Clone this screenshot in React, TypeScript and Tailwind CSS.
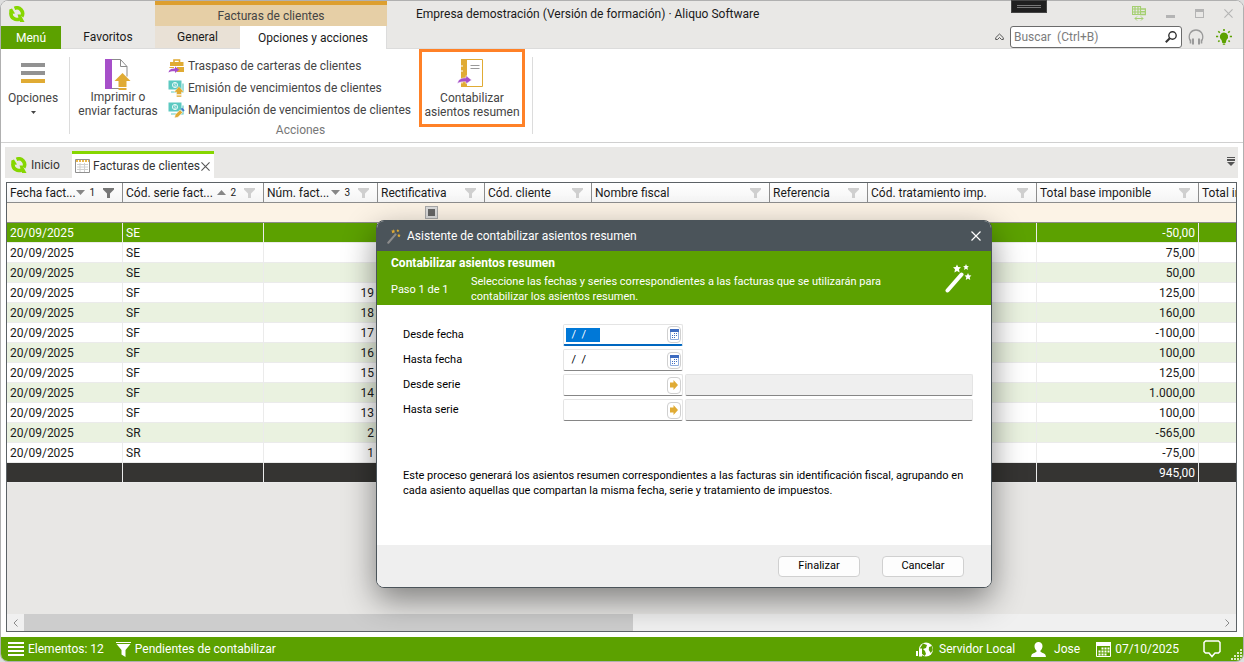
import { useEffect, useRef } from "react";
import type { ReactNode } from "react";
import clsx from "clsx";

interface Column {
  title: string;
  width: string;
  sort?: "asc" | "desc";
  order?: number;
  filtered?: boolean;
  checkbox?: boolean;
  last?: boolean;
}

const columns: Column[] = [
  { title: "Fecha fact...", width: "w-[116px]", sort: "desc", order: 1, filtered: true },
  { title: "Cód. serie fact...", width: "w-[141px]", sort: "asc", order: 2 },
  { title: "Núm. fact...", width: "w-[114px]", sort: "desc", order: 3 },
  { title: "Rectificativa", width: "w-[107px]", checkbox: true },
  { title: "Cód. cliente", width: "w-[107px]" },
  { title: "Nombre fiscal", width: "w-[178px]" },
  { title: "Referencia", width: "w-[98px]" },
  { title: "Cód. tratamiento imp.", width: "w-[169px]" },
  { title: "Total base imponible", width: "w-[162px]" },
  { title: "Total impuestos", width: "w-[120px]", last: true },
];

const invoices = [
  { serie: "SE", num: "", total: "-50,00" },
  { serie: "SE", num: "", total: "75,00" },
  { serie: "SE", num: "", total: "50,00" },
  { serie: "SF", num: "19", total: "125,00" },
  { serie: "SF", num: "18", total: "160,00" },
  { serie: "SF", num: "17", total: "-100,00" },
  { serie: "SF", num: "16", total: "100,00" },
  { serie: "SF", num: "15", total: "125,00" },
  { serie: "SF", num: "14", total: "1.000,00" },
  { serie: "SF", num: "13", total: "100,00" },
  { serie: "SR", num: "2", total: "-565,00" },
  { serie: "SR", num: "1", total: "-75,00" },
];

const Logo = () => (
  <svg viewBox="0 0 16 16" className="size-4 shrink-0" fill="none">
    <path d="M5.5 2.300A5.800 5.800 0 0 1 12.800 10.500" stroke="#86d600" strokeWidth="3.600" />
    <path d="M2 7.500a5.800 5.800 0 0 0 8.500 5.300" stroke="#86d600" strokeWidth="3.600" />
    <path d="M.300 3.500 3 2.500l3 5-5.800.8z" fill="#86d600" />
    <path d="M8.500 8.500h3L15.500 16H11z" fill="#86d600" />
  </svg>
);

const Funnel = ({ dark }: { dark?: boolean }) => (
  <svg viewBox="0 0 11 10" className={clsx("w-[11px] h-[10px] shrink-0", dark ? "text-[#767676]" : "text-[#cfcfcf]")}>
    <path d="M0 0h11v1.5L7 5.5V10H4V5.5L0 1.5z" fill="currentColor" />
  </svg>
);

const Triangle = ({ up }: { up?: boolean }) => (
  <svg viewBox="0 0 9 5" className="w-[9px] h-[5px] shrink-0">
    <path d={up ? "M0 5 4.5 0 9 5z" : "M0 0h9L4.5 5z"} fill="#868686" />
  </svg>
);

const BriefcaseIcon = () => (
  <svg viewBox="0 0 17 16" className="w-[17px] h-4 shrink-0" fill="none">
    <path d="M6 4V2h5.5v2" stroke="#e0ab34" strokeWidth="1.6" />
    <path d="M2 4h13.5v4H2z" fill="#e0ab34" />
    <path d="M9 9h7v5H9zM1.5 9H6v1H1.5z" fill="#e0ab34" />
    <path d="M.5 14.5C1 11 4 10.4 7 10.4V8.6l4.3 3.2L7 15v-1.8c-2.5-.2-5 .1-6.5 1.3z" fill="#a64fc9" />
  </svg>
);

const MoneyIcon = ({ edit }: { edit?: boolean }) => (
  <svg viewBox="0 0 17 17" className="size-[17px] shrink-0" fill="none">
    <path d="M3 12h12V3.5" stroke="#5cc9c1" strokeWidth="1.2" />
    <path d="M.5.5h13v9H.5z" fill="#5cc9c1" />
    <circle cx="7" cy="5" r="2.6" stroke="#e8f8f7" />
    <path d="M8.2 3.8C7 3 5.6 3.8 6.300 4.600c.6.700 2 .3 1.700 1.300-.3.700-1.500.6-2.200 0" stroke="#e8f8f7" strokeWidth=".8" />
    {edit ? (
      <>
        <path d="m6.500 16 .8-3.500 4.700-4.700 2.700 2.700-4.700 4.700z" fill="#e0ab34" stroke="#fff" strokeWidth=".6" />
        <path d="m12.800 7 1.300-1.200 2.500 2.500-1.200 1.300z" fill="#3f74c9" />
      </>
    ) : (
      <path d="M11 6.500 16 12h-2.500v2.500h-5V12H6zM8.500 15.200h5V17h-5z" fill="#e0ab34" stroke="#fff" strokeWidth=".4" />
    )}
  </svg>
);

const PrintIcon = () => (
  <svg viewBox="0 0 26 31" className="w-[26px] h-[31px]" fill="none">
    <path d="M7 .5h8.500l6.500 7v10M7 29.500h7M15.500.500v7H22" stroke="#8b8b8b" />
    <path d="M0 0h7v30H0z" fill="#a64fc9" />
    <path d="M17.500 14 25.500 22h-4v6h-8v-6h-4zM13.500 29h8v2h-8z" fill="#e0ab34" />
  </svg>
);

const LedgerIcon = () => (
  <svg viewBox="0 0 27 30" className="w-[27px] h-[30px] mr-1" fill="none">
    <path d="M5 1.500h20.500v27H5z" fill="#fff" stroke="#e0ab34" />
    <path d="M4 1h6v28H4v-3.500h2v-1.500H4v-10h2V12H4V9h2V7H4z" fill="#e0ab34" />
    <path d="M13.500 7.500h9M13.500 10.500h9" stroke="#9a9a9a" />
    <path d="M.5 25.500C1 21 5 19.800 9 19.800V17.500l5.500 4.500L9 26v-2.200c-4-.3-6.500.3-8.500 1.700z" fill="#a64fc9" stroke="#fff" strokeWidth=".5" />
  </svg>
);

const Star = ({ x, y, r, fill }: { x: number; y: number; r: number; fill: string }) => (
  <path
    transform={`translate(${x} ${y}) scale(${r})`}
    d="M0-1 .3-.35 1-.3.5.2.65 1 0 .6-.65 1-.5.2-1-.3-.3-.35z"
    fill={fill}
  />
);

const WandIcon = ({ stick, star, className }: { stick: string; star: string; className: string }) => (
  <svg viewBox="0 0 27 29" className={className} fill="none">
    <path d="M2.500 26.500 16.500 10.500" stroke={stick} strokeWidth="4" strokeLinecap="round" />
    <Star x={12} y={4.5} r={4} fill={star} />
    <Star x={21} y={3} r={2.9} fill={star} />
    <Star x={23} y={12.5} r={3.4} fill={star} />
  </svg>
);

const CloseX = ({ className }: { className: string }) => (
  <svg viewBox="0 0 10 10" className={className} fill="none" stroke="currentColor" strokeWidth="1.200">
    <path d="m.5.500 9 9m0-9-9 9" />
  </svg>
);

const CalendarButtonIcon = () => (
  <svg viewBox="0 0 9 11" className="w-[9px] h-[11px] shrink-0">
    <path d="M0 0h9v3H0z" fill="#3e6cc0" />
    <path d="M.5 3v7.500h8V3" fill="none" stroke="#8fadde" />
    <path d="M4 4h1v1H4zM6 4h1v1H6zM2 6h1v1H2zM4 6h1v1H4zM6 6h1v1H6zM2 8h1v1H2zM4 8h1v1H4z" fill="#3e6cc0" />
  </svg>
);

const ArrowButtonIcon = () => (
  <svg viewBox="0 0 8 10" className="w-2 h-2.5 shrink-0">
    <path d="M0 2.500h3.500V0L8 5 3.500 10V7.500H0z" fill="#e0ab34" />
  </svg>
);

const GridHeader = ({ column }: { column: Column }) => (
  <th className="h-5 p-0 pl-[3px] font-normal text-left border-r border-b border-[#8d8d8d] bg-linear-to-b from-white to-[#f4f4f4]">
    <div className="flex items-center pr-2 h-[19px]">
      <span className="flex-1 whitespace-nowrap">{column.title}</span>
      {column.sort && (
        <span className="flex items-center gap-1 mr-2 text-[10px]">
          <Triangle up={column.sort === "asc"} />
          {column.order}
        </span>
      )}
      {!column.last && <Funnel dark={column.filtered} />}
    </div>
  </th>
);

const InvoiceGrid = () => (
  <div className="flex-1 min-h-0 mt-1 mb-[5px] ml-[5px] mr-1.5 border border-[#5c6266] bg-[#e8e7e5] flex flex-col overflow-hidden">
    <div className="flex-1 overflow-hidden">
      <table className="table-fixed w-[1312px] border-separate border-spacing-0 leading-4">
        <colgroup>
          {columns.map((column) => (
            <col key={column.title} className={column.width} />
          ))}
        </colgroup>
        <thead>
          <tr>
            {columns.map((column) => (
              <GridHeader key={column.title} column={column} />
            ))}
          </tr>
          <tr>
            {columns.map((column) => (
              <td key={column.title} className="h-5 p-0 bg-[#fcf3e6] border-b border-[#8d8d8d]">
                {column.checkbox && (
                  <input
                    type="checkbox"
                    aria-label={column.title}
                    className="block mx-auto appearance-none size-[13px] p-0.5 border border-[#a8a8a8] bg-[#666] bg-clip-content shadow-[inset_0_0_0_2px_#dcdcdc]"
                  />
                )}
              </td>
            ))}
          </tr>
        </thead>
        <tbody>
          {invoices.map((invoice, i) => (
            <tr
              key={i}
              className={clsx(
                i === 0 ? "bg-[#5ca100] text-white" : i % 2 === 0 ? "bg-[#eaf2e0]" : "bg-white",
              )}
            >
              {columns.map((column, c) => (
                <td
                  key={column.title}
                  className={clsx(
                    "h-5 py-0 px-[3px] border-r border-b border-[#ebebeb]",
                    (c === 2 || c === 8) && "text-right",
                  )}
                >
                  {c === 0 && "20/09/2025"}
                  {c === 1 && invoice.serie}
                  {c === 2 && invoice.num}
                  {c === 8 && invoice.total}
                </td>
              ))}
            </tr>
          ))}
        </tbody>
        <tfoot>
          <tr className="bg-[#353432] text-white">
            {columns.map((column, c) => (
              <td key={column.title} className="h-5 py-0 px-[3px] border-r border-b border-[#ebebeb] text-right">
                {c === 8 && "945,00"}
              </td>
            ))}
          </tr>
        </tfoot>
      </table>
    </div>
    <div className="flex items-center h-[17px] bg-[#f0f0f0] text-[#8a8a8a]">
      <button aria-label="Desplazar a la izquierda" className="w-[17px] flex justify-center">
        <svg viewBox="0 0 5 8" className="w-[5px] h-2" fill="none" stroke="currentColor">
          <path d="M4.500.500 1 4l3.500 3.500" />
        </svg>
      </button>
      <div className="flex-1 h-full">
        <div className="w-[51%] h-full bg-[#cdcdcd]" />
      </div>
      <button aria-label="Desplazar a la derecha" className="w-[17px] flex justify-center">
        <svg viewBox="0 0 5 8" className="w-[5px] h-2" fill="none" stroke="currentColor">
          <path d="M.5.500 4 4 .5 7.500" />
        </svg>
      </button>
    </div>
  </div>
);

const TitleBar = () => (
  <header className="flex h-12 bg-[#e9e8e6]">
    <div className="w-[154px] flex flex-col">
      <div className="h-[25px] pl-2 flex items-center">
        <Logo />
      </div>
      <div className="flex flex-1">
        <button className="w-15 bg-[#5ca100] text-white">Menú</button>
        <button className="flex-1 border-b border-[#dcdcdc]">Favoritos</button>
      </div>
    </div>
    <div className="w-58 flex flex-col">
      <div className="h-[25px] border-t-4 border-[#dd9f2f] bg-[#e6cfa6] text-[#444] flex items-center justify-center">
        Facturas de clientes
      </div>
      <div className="flex flex-1">
        <button className="w-[85px] bg-[#e9e1d6] border-b border-[#dcdcdc]">General</button>
        <button className="flex-1 bg-white border-r border-[#dcdcdc]">Opciones y acciones</button>
      </div>
    </div>
    <div className="flex-1 flex flex-col border-b border-[#dcdcdc]">
      <div className="h-[25px] pl-[29px] pr-2.5 flex items-center">
        <h1 className="flex-1">Empresa demostración (Versión de formación) · Aliquo Software</h1>
        <div className="flex items-center gap-5 text-[#b4b4b4]">
          <svg viewBox="0 0 14 15" className="w-3.5 h-[15px]" fill="none" stroke="#a5cf72">
            <path d="M.5.500h8v8h-8zM.5 3h8M.5 6h8M3 .5v8M6 .5v8" strokeWidth="1.200" />
            <path d="M8 3h5.500v5.500H8M9 5.700h4" strokeWidth="1.400" />
            <path d="M3 12.500h8M5 10.500l-2 2 2 2M9 10.500l2 2-2 2" />
          </svg>
          <button aria-label="Minimizar" className="size-[9px] flex items-end">
            <span className="w-full h-[3px] bg-[#b4b4b4]" />
          </button>
          <button aria-label="Maximizar" className="size-[9px] border border-t-3 border-[#b4b4b4]" />
          <button aria-label="Cerrar">
            <CloseX className="size-[9px]" />
          </button>
        </div>
      </div>
      <div className="flex-1 flex items-center justify-end gap-1.5 pr-[11px]">
        <button aria-label="Contraer cinta">
          <svg viewBox="0 0 9 8" className="w-[9px] h-2" fill="none" stroke="#555">
            <path d="M.7 4.700 4.500 1l3.800 3.700v1.800H6.500L4.500 4.500l-2 2H.7z" />
          </svg>
        </button>
        <label className="w-43 h-[22px] flex items-center border border-[#6b6b6b] rounded-[3px] bg-white pl-[3px] pr-1">
          <input
            aria-label="Buscar"
            placeholder="Buscar  (Ctrl+B)"
            className="flex-1 min-w-0 outline-none placeholder:text-[#7c7c7c] whitespace-pre"
          />
          <svg viewBox="0 0 12 12" className="size-3" fill="none" stroke="#333">
            <circle cx="7.500" cy="4.500" r="3.700" strokeWidth="1.400" />
            <path d="M4.800 7.200.8 11.200" strokeWidth="2" />
          </svg>
        </label>
        <svg viewBox="0 0 16 16" className="size-4" fill="none" stroke="#9a9a9a">
          <path d="M2 11.500C-.5 5 3.500 1 8 1s8.500 4 6 10.500" strokeWidth="1.300" />
          <path d="M5 9.500v6M11 9.500v6" strokeWidth="2" />
          <path d="M2.500 10.500v4M13.500 10.500v4" strokeWidth="1.600" />
        </svg>
        <svg viewBox="0 0 16 16" className="size-4 ml-1.5" fill="#5ca100" stroke="#5ca100">
          <path d="M8 3.500a4.200 4.200 0 0 0-2.500 7.500l.8 3h3.400l.8-3A4.200 4.200 0 0 0 8 3.500zM6.800 14.500h2.400v1.300H6.800z" stroke="none" />
          <path d="M8 0v2M0 7.500h2.200M13.800 7.500H16M2.300 2.300l1.500 1.500M13.700 2.300l-1.500 1.500M2.300 12.700l1.200-1.200M13.700 12.700l-1.200-1.200" strokeWidth="1.600" />
        </svg>
      </div>
    </div>
  </header>
);

const Action = ({ icon, children }: { icon: ReactNode; children: ReactNode }) => (
  <button className="flex items-center gap-[3px] h-[22px] whitespace-nowrap">
    {icon}
    {children}
  </button>
);

const Ribbon = () => (
  <div className="flex h-[94px] border-b border-[#d0d0d0] text-[#444] leading-3.5">
    <button className="w-16 flex flex-col items-center pt-3.5">
      <span className="w-6 h-5 flex flex-col justify-between">
        <span className="h-1 bg-[#929292]" />
        <span className="h-1 bg-[#929292]" />
        <span className="h-1 bg-[#e0ab34]" />
      </span>
      <span className="mt-2">Opciones</span>
      <svg viewBox="0 0 5 3" className="w-[5px] h-[3px] mt-1.5">
        <path d="M0 0h5L2.500 3z" fill="#444" />
      </svg>
    </button>
    <div className="w-px h-[77px] mt-2 ml-1 bg-[#dcdcdc]" />
    <div className="flex flex-col">
      <div className="flex h-[78px]">
        <button className="w-24 flex flex-col items-center pt-2.5">
          <PrintIcon />
          <span className="whitespace-nowrap">
            Imprimir o
            <br />
            enviar facturas
          </span>
        </button>
        <div className="w-[253px] flex flex-col items-start pt-1.5 pl-0.5">
          <Action icon={<BriefcaseIcon />}>Traspaso de carteras de clientes</Action>
          <Action icon={<MoneyIcon />}>Emisión de vencimientos de clientes</Action>
          <Action icon={<MoneyIcon edit />}>Manipulación de vencimientos de clientes</Action>
        </div>
        <button className="w-[106px] border-3 border-[#ff8127] flex flex-col items-center pt-1.5">
          <LedgerIcon />
          <span className="mt-[3px] whitespace-nowrap">
            Contabilizar
            <br />
            asientos resumen
          </span>
        </button>
      </div>
      <div className="text-center pl-1.5 text-[#777] leading-[7px]">Acciones</div>
    </div>
    <div className="w-px h-[77px] mt-2 ml-[7px] bg-[#dcdcdc]" />
  </div>
);

const DocumentTabs = () => (
  <nav className="flex items-end h-[31px] mt-1 ml-1 mr-[5px] bg-[#e9e8e6] text-[#333]">
    <a href="#inicio" className="w-[67px] h-[27px] flex items-center gap-1 pl-1.5">
      <Logo />
      Inicio
    </a>
    <div className="h-[27px] w-[142px] border-t-3 border-[#86d600] bg-white flex items-center pl-[3px] pr-1 whitespace-nowrap">
      <svg viewBox="0 0 15 14" className="w-[15px] h-3.5 mr-[3px] shrink-0" fill="none">
        <path d="M.5.500h14v13H.5z" stroke="#8f8f8f" />
        <path d="M1 2h13" stroke="#e9b64c" strokeWidth="2" strokeDasharray="2 1" />
        <path d="M2 5.500h11M2 8h11M2 10.500h11M5 4v9M9.500 4v9" stroke="#d0d0d0" />
      </svg>
      <a href="#facturas" className="flex-1">Facturas de clientes</a>
      <button aria-label="Cerrar pestaña">
        <CloseX className="size-[9px] text-[#555]" />
      </button>
    </div>
    <button aria-label="Lista de documentos" className="ml-auto mr-[3px] mb-3">
      <svg viewBox="0 0 8 9" className="w-2 h-[9px]" fill="#555">
        <path d="M0 0h8v1H0zM0 2h8v2H0zM0 5h8L4 9z" />
      </svg>
    </button>
  </nav>
);

const StatusBar = () => (
  <footer className="flex items-center h-6 pl-[7px] bg-[#5ca100] text-white">
    <svg viewBox="0 0 16 14" className="w-4 h-3.5 mr-1">
      <path d="M0 0h16v2H0zM0 4h16v2H0zM0 8h16v2H0zM0 12h16v2H0z" fill="#fff" />
    </svg>
    <span>Elementos: 12</span>
    <svg viewBox="0 0 15 15" className="size-[15px] ml-3 mr-1">
      <path d="M0 0h15v1H0zM.5 2h14L9.500 8v7l-4-2.500V8z" fill="#fff" />
    </svg>
    <span>Pendientes de contabilizar</span>
    <svg viewBox="0 0 17 15" className="w-[17px] h-[15px] ml-auto mr-1.5" fill="#fff">
      <circle cx="10" cy="7.500" r="7" />
      <path d="M7 1.500 11 3l-1 3-3 1 2 2 1 3-1.500 2L5 11 4 6zM13 5l3-1 .8 4-2 3-2-3z" fill="#5ca100" />
      <path d="M0 9h2v5H0zM3 6.500h3v8H3z" />
    </svg>
    <span>Servidor Local</span>
    <svg viewBox="0 0 15 15" className="size-[15px] ml-4 mr-2" fill="#fff">
      <path d="M7.500 0a4 4 0 0 0-4 4.300c.1 2 1 3.700 2.300 4.700-.3 1.800-4.500 2-5.300 4L0 15h15l-.5-2c-.8-2-5-2.200-5.300-4 1.300-1 2.200-2.700 2.300-4.700A4 4 0 0 0 7.500 0z" />
    </svg>
    <span>Jose</span>
    <svg viewBox="0 0 15 15" className="size-[15px] ml-4 mr-1" fill="none">
      <path d="M.5.500h14v14H.5z" stroke="#fff" />
      <path d="M0 0h15v4H0z" fill="#fff" />
      <path d="M5.500 6.500h8M2.500 9.500h11M2.500 12.500h8" stroke="#fff" strokeWidth="2" strokeDasharray="2 1" />
    </svg>
    <span>07/10/2025</span>
    <svg viewBox="0 0 18 18" className="size-[18px] ml-6 mr-2.5" fill="none" stroke="#fff" strokeWidth="1.500">
      <path d="M2.500 1h13l1.500 1.500v9L15.500 13H12l-3 3.500L6 13H2.500L1 11.500v-9z" />
    </svg>
    <svg viewBox="0 0 12 12" className="size-3 self-end" fill="#dbeac4">
      <path d="M9 0h2v2H9zM6 3h2v2H6zM9 3h2v2H9zM3 6h2v2H3zM6 6h2v2H6zM9 6h2v2H9zM0 9h2v2H0zM3 9h2v2H3zM6 9h2v2H6zM9 9h2v2H9z" />
    </svg>
  </footer>
);

interface FieldProps {
  id: string;
  label: string;
  type: "date" | "serie";
  active?: boolean;
}

const Field = ({ id, label, type, active }: FieldProps) => {
  const input = useRef<HTMLInputElement>(null);

  useEffect(() => {
    if (active) {
      input.current?.focus();
      input.current?.select();
    }
  }, [active]);

  return (
    <div className="flex items-center h-[22px]">
      <label htmlFor={id} className="w-40">
        {label}
      </label>
      <div
        className={clsx(
          "w-30 h-[22px] flex items-center border border-[#e4e4e4] rounded-[2px] bg-white pl-0.5",
          active ? "border-b-2 border-b-[#0067c0]" : "border-b-[#868686]",
        )}
      >
        <input
          id={id}
          ref={input}
          defaultValue={type === "date" ? "  /  /     " : ""}
          className="flex-1 min-w-0 leading-[14px] outline-none selection:bg-[#0078d7] selection:text-white"
        />
        <button
          type="button"
          aria-label={`Buscar ${label.toLowerCase()}`}
          className="w-3.5 h-[17px] mr-px flex items-center justify-center border border-[#d0d0d0] rounded-[4px]"
        >
          {type === "date" ? <CalendarButtonIcon /> : <ArrowButtonIcon />}
        </button>
      </div>
      {type === "serie" && (
        <input
          readOnly
          aria-label={`Nombre ${label.toLowerCase()}`}
          className="flex-1 h-[22px] ml-0.5 border border-[#e4e4e4] border-b-[#868686] rounded-[2px] bg-[#efefef]"
        />
      )}
    </div>
  );
};

const WizardDialog = () => (
  <div
    role="dialog"
    aria-labelledby="wizard-title"
    className="absolute left-[376px] top-[220px] w-[616px] rounded-lg overflow-hidden border border-[#4b545a] bg-white text-black text-[11px] shadow-[0_12px_32px_rgba(0,0,0,0.45)]"
  >
    <div className="flex items-center h-[30px] px-2.5 bg-[#4b545a] text-white text-[12px]">
      <WandIcon stick="#8c8c8c" star="#e0ab34" className="w-3.5 h-[15px] mr-1.5" />
      <h2 id="wizard-title" className="flex-1">
        Asistente de contabilizar asientos resumen
      </h2>
      <button aria-label="Cerrar asistente">
        <CloseX className="size-2.5" />
      </button>
    </div>
    <div className="flex items-center justify-between h-[54px] pl-3.5 pr-[19px] bg-[#5ca100] text-white leading-[15px]">
      <div className="pt-1">
        <h3 className="font-bold text-[12px] leading-[15px]">Contabilizar asientos resumen</h3>
        <div className="flex items-end mt-[3px]">
          <span className="w-20 self-center">Paso 1 de 1</span>
          <p className="w-[430px]">
            Seleccione las fechas y series correspondientes a las facturas que se utilizarán para
            contabilizar los asientos resumen.
          </p>
        </div>
      </div>
      <WandIcon stick="#fff" star="#fff" className="w-[27px] h-[29px]" />
    </div>
    <form className="h-60 pl-[26px] pr-[18px] pt-[19px] flex flex-col gap-[3px]">
      <Field id="desde-fecha" label="Desde fecha" type="date" active />
      <Field id="hasta-fecha" label="Hasta fecha" type="date" />
      <Field id="desde-serie" label="Desde serie" type="serie" />
      <Field id="hasta-serie" label="Hasta serie" type="serie" />
      <p className="mt-11 leading-[15px]">
        Este proceso generará los asientos resumen correspondientes a las facturas sin identificación
        fiscal, agrupando en cada asiento aquellas que compartan la misma fecha, serie y tratamiento de
        impuestos.
      </p>
    </form>
    <div className="flex items-center justify-end gap-[22px] h-[42px] pr-[27px] bg-[#efefef]">
      <button className="w-[82px] h-[21px] rounded-[4px] border border-[#d0d0d0] bg-[#fdfdfd]">Finalizar</button>
      <button className="w-[82px] h-[21px] rounded-[4px] border border-[#d0d0d0] bg-[#fdfdfd]">Cancelar</button>
    </div>
  </div>
);

export default function App() {
  return (
    <div className="relative h-screen bg-[#dedede] font-[Roboto,'Noto_Sans',sans-serif] text-[12px] text-[#1a1a1a]">
      <div className="h-full flex flex-col rounded-lg overflow-hidden border border-[#b0b0b0] bg-white">
        <TitleBar />
        <Ribbon />
        <DocumentTabs />
        <InvoiceGrid />
        <StatusBar />
      </div>
      <div className="absolute top-0 right-[197px] w-9 h-[13px] bg-[#1f1f1f] border border-[#444] flex items-center justify-center">
        <span className="w-6 h-[3px] border-y border-[#777]" />
      </div>
      <WizardDialog />
    </div>
  );
}
